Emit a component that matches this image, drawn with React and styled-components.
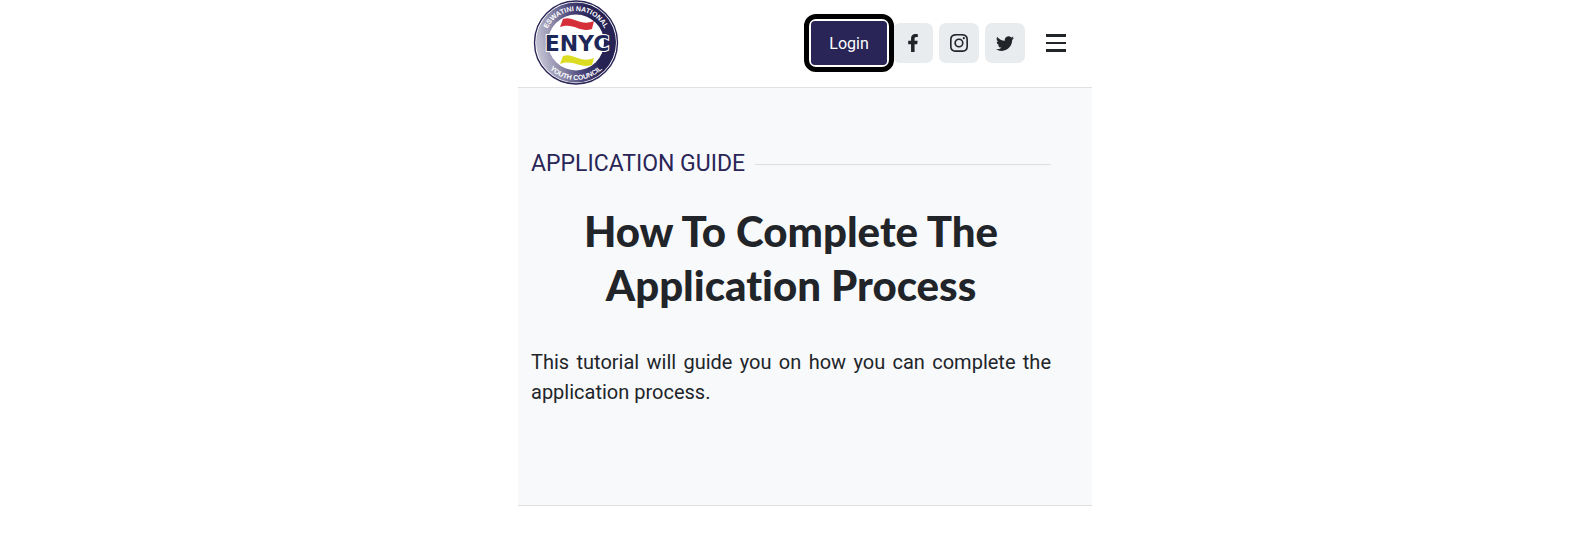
import React from "react";
import styled, { createGlobalStyle } from "styled-components";
import { FaFacebookF } from "react-icons/fa";
import { BsInstagram, BsTwitter } from "react-icons/bs";

const GlobalStyle = createGlobalStyle`
  *, *::before, *::after { box-sizing: border-box; }
  body {
    margin: 0;
    background: #fff;
    color: #212529;
    font-family: Roboto, "Liberation Sans", sans-serif;
  }
`;

const Page = styled.div`
  display: flex;
  justify-content: center;
  padding-left: 24px;
`;

const Column = styled.div`
  width: 100%;
  max-width: 574px;
`;

const Header = styled.header`
  display: flex;
  align-items: center;
  justify-content: space-between;
  padding: 0 26px 1px 15px;
  border-bottom: 1px solid #dfe1e4;
`;

const LogoLink = styled.a`
  display: block;
  line-height: 0;
`;

const Actions = styled.nav`
  display: flex;
  align-items: center;
  gap: 6px;
`;

const LoginButton = styled.button`
  position: relative;
  z-index: 1;
  width: 76px;
  height: 44px;
  padding: 0;
  border: 0;
  border-radius: 4px;
  background: #292556;
  box-shadow: 0 0 0 3px #fff;
  color: #fff;
  font: inherit;
  font-size: 16px;
  cursor: pointer;

  &::after {
    content: "";
    position: absolute;
    inset: -7px;
    border: 5px solid #000;
    border-radius: 12px;
  }
`;

const SocialLink = styled.a`
  display: grid;
  place-items: center;
  width: 40px;
  height: 40px;
  border-radius: 7px;
  background: #e9ecef;
  color: #212529;
  font-size: 18px;
`;

const MenuButton = styled.button`
  display: grid;
  place-items: center;
  width: 20px;
  height: 40px;
  margin-left: 15px;
  padding: 0;
  border: 0;
  background: none;
  color: #212529;
  cursor: pointer;
`;

const Hero = styled.main`
  padding: 60px 41px 98px 13px;
  border-bottom: 1px solid #dcdee1;
  background: #f8f9fb;
`;

const Eyebrow = styled.p`
  display: flex;
  align-items: center;
  gap: 10px;
  margin: 0 0 24px;
  color: #292556;
  font-size: 23px;
  line-height: 32px;
  text-transform: uppercase;

  &::after {
    content: "";
    flex: 1;
    height: 1px;
    background: #dcdfe2;
  }
`;

const Title = styled.h1`
  margin: 0 0 35px;
  font-family: Lato, "Liberation Sans", sans-serif;
  font-size: 42px;
  font-weight: 900;
  font-variant-ligatures: none;
  line-height: 54px;
  text-align: center;
`;

const Lead = styled.p`
  margin: 0;
  font-size: 20px;
  line-height: 30px;
  text-align: justify;
`;

const RingText = styled.text`
  font-family: "Liberation Sans", sans-serif;
  font-size: 7px;
  font-weight: 700;
  text-anchor: middle;
  fill: #fff;
`;

const LogoName = styled.text`
  font-family: "DejaVu Sans", sans-serif;
  font-size: 22px;
  font-weight: 700;
  text-anchor: middle;
  fill: #1d2858;
  stroke: #fff;
  stroke-width: 2px;
  paint-order: stroke;
`;

function Logo() {
  return (
    <svg width="86" height="86" viewBox="0 0 86 86" role="img" aria-label="Eswatini National Youth Council">
      <defs>
        <linearGradient id="ring" x1="0" y1="0.6" x2="1" y2="0.4">
          <stop offset="0" stopColor="#c9c8d8" />
          <stop offset="0.25" stopColor="#8f8cab" />
          <stop offset="0.5" stopColor="#49457a" />
          <stop offset="0.75" stopColor="#262254" />
        </linearGradient>
        <path id="arcTop" d="M11 43 A32 32 0 0 1 75 43" />
        <path id="arcBottom" d="M6 43 A37 37 0 0 0 80 43" />
      </defs>
      <circle cx="43" cy="42.5" r="41.5" fill="#fff" stroke="#292556" strokeWidth="1.4" />
      <circle cx="43" cy="42.5" r="40" fill="url(#ring)" />
      <circle cx="43" cy="42.5" r="28" fill="#fff" />
      <path d="M30 19 C40 15 47 27 61 21 L59 29 C46 33 41 22 27 27 Z" fill="#d5303a" />
      <path d="M30 56 C40 52 47 64 61 58 L59 65 C46 69 41 59 27 64 Z" fill="#dcdc22" />
      <LogoName x="44" y="51">ENYC</LogoName>
      <RingText>
        <textPath href="#arcTop" startOffset="50%">ESWATINI NATIONAL</textPath>
      </RingText>
      <RingText>
        <textPath href="#arcBottom" startOffset="50%">YOUTH COUNCIL</textPath>
      </RingText>
    </svg>
  );
}

export default function App() {
  return (
    <>
      <GlobalStyle />
      <Page>
        <Column>
          <Header>
            <LogoLink href="#home"><Logo /></LogoLink>
            <Actions aria-label="Main">
              <LoginButton type="button">Login</LoginButton>
              <SocialLink href="#facebook" aria-label="Facebook"><FaFacebookF /></SocialLink>
              <SocialLink href="#instagram" aria-label="Instagram"><BsInstagram /></SocialLink>
              <SocialLink href="#twitter" aria-label="Twitter"><BsTwitter /></SocialLink>
              <MenuButton type="button" aria-label="Open menu">
                <svg width="20" height="18" viewBox="0 0 20 18" fill="currentColor" aria-hidden="true">
                  <path d="M0 0h20v3H0zM0 8h20v2H0zM0 15h20v3H0z" />
                </svg>
              </MenuButton>
            </Actions>
          </Header>
          <Hero>
            <Eyebrow>Application Guide</Eyebrow>
            <Title>How To Complete The Application Process</Title>
            <Lead>This tutorial will guide you on how you can complete the application process.</Lead>
          </Hero>
        </Column>
      </Page>
    </>
  );
}
